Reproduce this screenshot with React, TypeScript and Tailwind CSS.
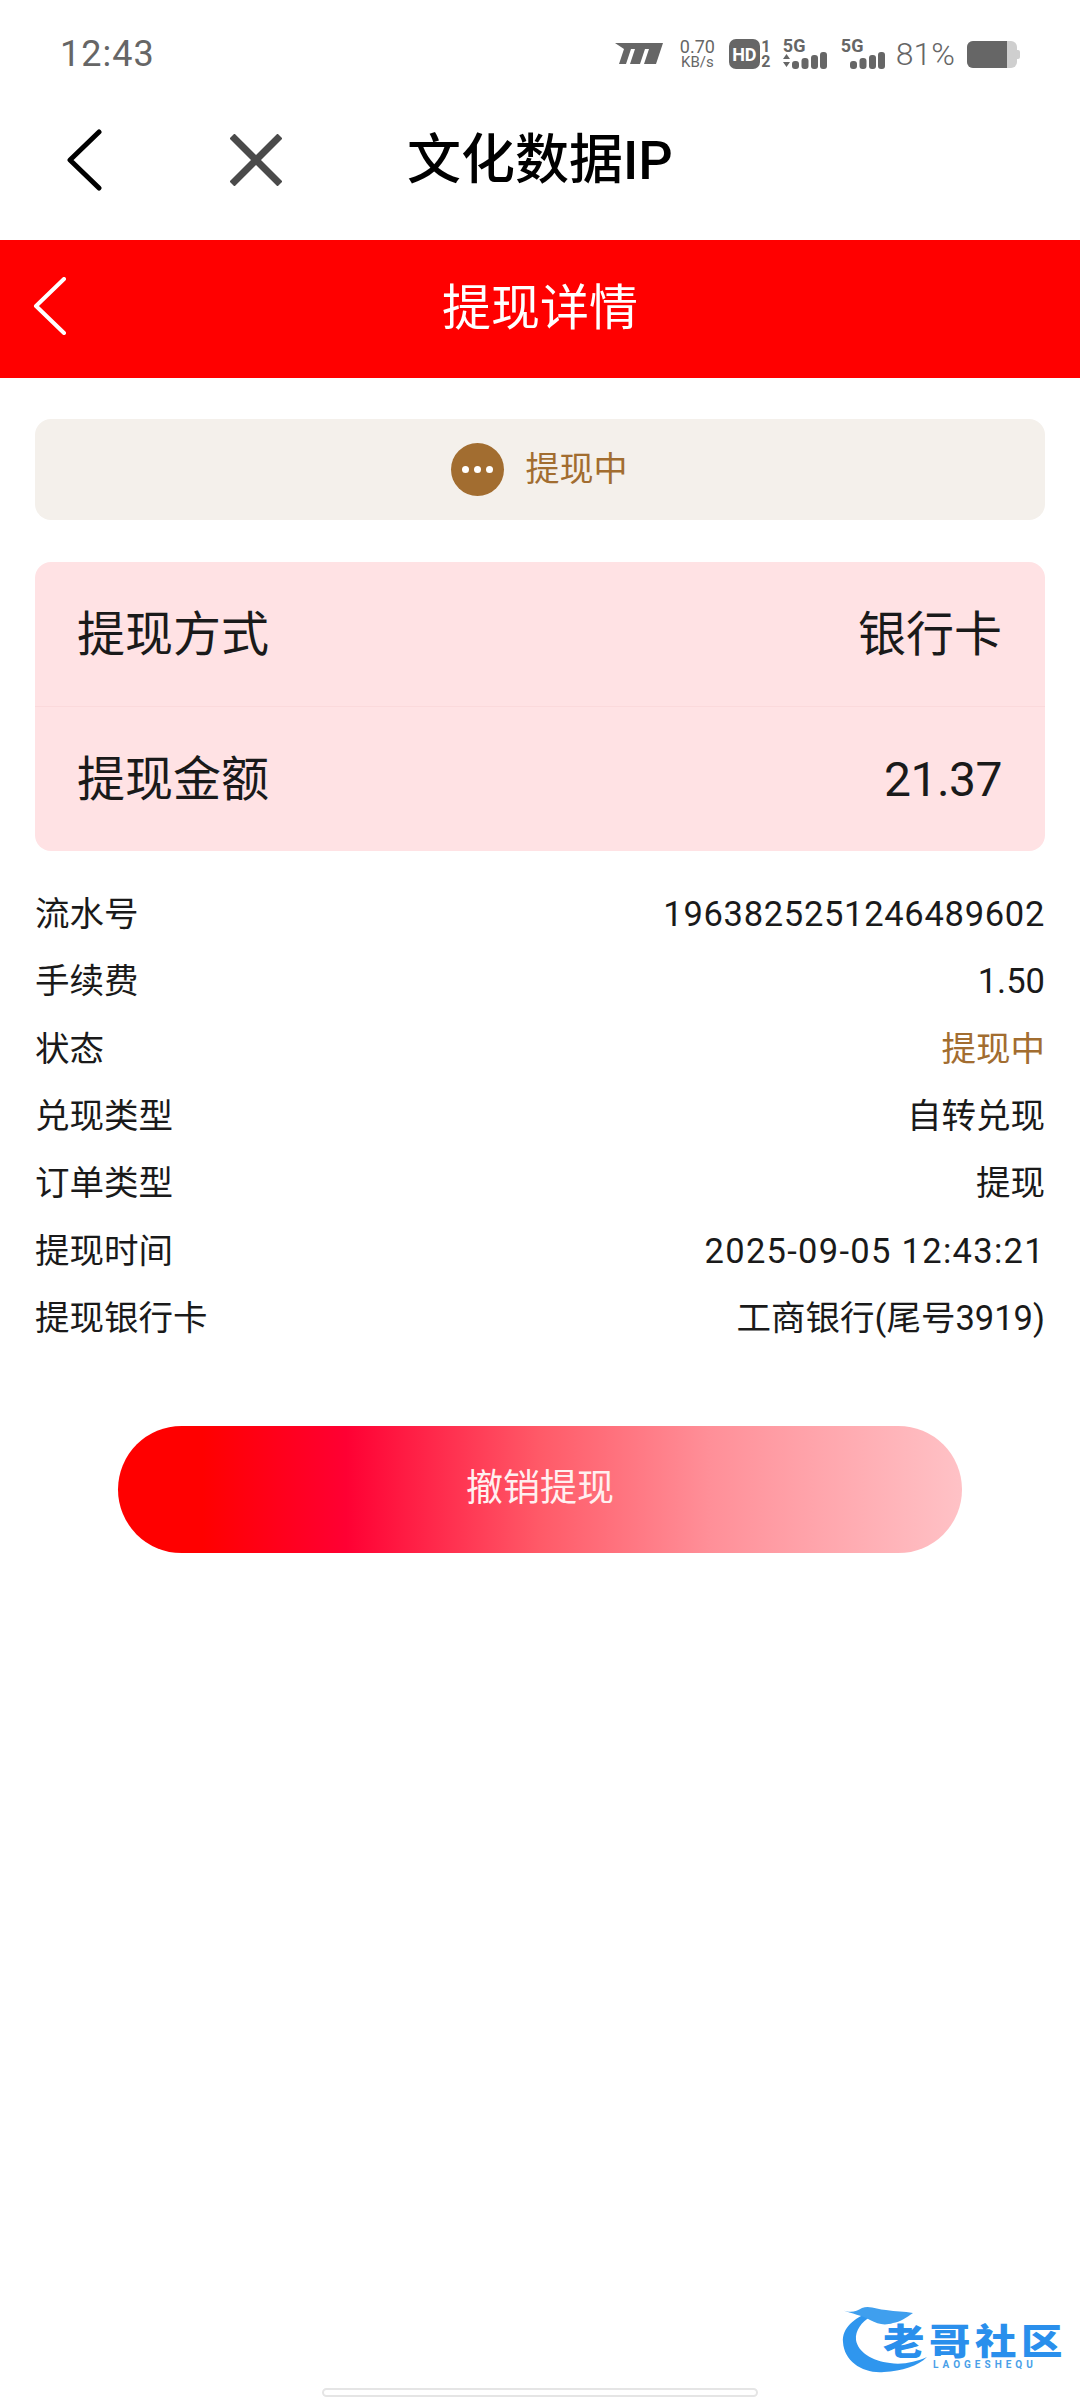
const FONT = '"Roboto", "Noto Sans CJK SC", sans-serif';

const details: { label: string; value: string; highlight?: boolean; spacing?: string }[] = [
  { label: '流水号', value: '1963825251246489602', spacing: 'tracking-[0.7px]' },
  { label: '手续费', value: '1.50' },
  { label: '状态', value: '提现中', highlight: true },
  { label: '兑现类型', value: '自转兑现' },
  { label: '订单类型', value: '提现' },
  { label: '提现时间', value: '2025-09-05 12:43:21', spacing: 'tracking-[1.3px]' },
  { label: '提现银行卡', value: '工商银行(尾号3919)' },
];

function SignalBars({ arrows }: { arrows?: boolean }) {
  return (
    <svg className="block" width="44" height="17" viewBox="0 0 44 17" fill="#666">
      {arrows && <path d="M0 7 L3.5 2 L7 7 Z M0 10 L7 10 L3.5 15 Z" />}
      <rect x="9" y="9" width="7" height="8" rx="3" />
      <rect x="18.5" y="6" width="7" height="11" rx="3" />
      <rect x="28" y="3" width="7" height="14" rx="3" />
      <rect x="37" y="0" width="7" height="17" rx="3" />
    </svg>
  );
}

function StatusBar() {
  return (
    <div className="h-[108px] flex items-center justify-between pl-[60px] pr-[60px] text-[#666]">
      <span className="text-[36px] tracking-[1px]">12:43</span>
      <div className="flex items-center">
        <svg width="48" height="22" viewBox="0 0 48 22" fill="#666">
          <path d="M0 0 H48 L41 21 H29 L34 6 H30 L25 21 H15 L20 6 H16 L11 21 H4 L9 6 Z" />
        </svg>
        <div className="ml-[17px] w-[35px] flex flex-col items-center leading-none">
          <span className="text-[18px] leading-[17px]">0.70</span>
          <span className="text-[15px] leading-[15px]">KB/s</span>
        </div>
        <div className="ml-[14px] w-[31px] h-[30px] rounded-[7px] bg-[#666] text-white text-[18px] font-bold flex items-center justify-center">
          HD
        </div>
        <div className="ml-[1px] w-[10px] flex flex-col items-center text-[16px] font-bold leading-[15px]">
          <span>1</span>
          <span>2</span>
        </div>
        <div className="ml-[12px] w-[44px] flex flex-col">
          <span className="text-[18px] font-bold leading-[13px]">5G</span>
          <SignalBars arrows />
        </div>
        <div className="ml-[14px] w-[44px] flex flex-col">
          <span className="text-[18px] font-bold leading-[13px]">5G</span>
          <SignalBars />
        </div>
        <span className="ml-[11px] text-[32px] font-light">81%</span>
        <div className="ml-[12px] flex items-center">
          <div className="w-[50px] h-[27px] rounded-[6px] bg-[#cfcfcf] overflow-hidden">
            <div className="w-[80%] h-full bg-[#666]" />
          </div>
          <div className="w-[3px] h-[9px] rounded-r-[2px] bg-[#cfcfcf]" />
        </div>
      </div>
    </div>
  );
}

function NavBar() {
  return (
    <div className="h-[132px] pb-[28px] flex items-center">
      <svg className="ml-[66px]" width="36" height="62" viewBox="0 0 36 62" fill="none" stroke="#000" strokeWidth="5" strokeLinecap="round" strokeLinejoin="round">
        <path d="M33 3 L4 31 L33 59" />
      </svg>
      <svg className="ml-[128px]" width="52" height="52" viewBox="0 0 52 52" fill="none" stroke="#4a4a4a" strokeWidth="7">
        <path d="M2 2 L50 50 M50 2 L2 50" />
      </svg>
      <span className="ml-[125px] text-[54px] font-medium text-black">文化数据IP</span>
    </div>
  );
}

function RedHeader() {
  return (
    <div className="h-[138px] bg-[#ff0000] relative flex items-center justify-center">
      <svg className="absolute left-[33px] top-[37px]" width="34" height="58" viewBox="0 0 34 58" fill="none" stroke="#fff" strokeWidth="4" strokeLinecap="round" strokeLinejoin="round">
        <path d="M31 2 L3 29 L31 56" />
      </svg>
      <span className="text-[49px] text-white">提现详情</span>
    </div>
  );
}

function Watermark() {
  return (
    <div className="absolute left-[840px] top-[2302px] w-[230px] h-[78px] pointer-events-none">
      <svg className="absolute left-0 top-0" width="100" height="78" viewBox="0 0 100 78" fill="none">
        <path d="M30 10 C14 16 2 26 3 40 C4 60 24 72 44 70 C62 69 78 64 87 55 C76 60 62 63 50 61 C32 59 18 50 16 38 C15 28 22 20 30 15 Z" fill="#2f96ee" />
        <path d="M2 8 C10 11 16 10 22 6 C30 3 38 8 46 8 C56 10 64 9 73 11 C66 16 60 20 53 21 C44 24 38 22 30 18 C22 13 12 12 2 8 Z" fill="#3f9fee" />
      </svg>
      <span className="absolute left-[43px] top-[25px] text-[36px] leading-[32px] font-black text-[#2a8fec] whitespace-nowrap tracking-[4px] origin-left scale-x-[1.15]">老哥社区</span>
      <span className="absolute left-[93px] top-[58px] text-[10px] leading-[10px] font-bold text-[#4a9fe8] tracking-[4px]">LAOGESHEQU</span>
    </div>
  );
}

export default function App() {
  return (
    <div className="w-[1080px] h-[2400px] bg-white flex flex-col relative overflow-hidden" style={{ fontFamily: FONT }}>
      <StatusBar />
      <NavBar />
      <RedHeader />

      <div className="flex-1 px-[35px] pt-[41px] flex flex-col">
        {/* 状态 */}
        <div className="h-[101px] rounded-[16px] bg-[#f4f0eb] flex items-center justify-center">
          <div className="w-[53px] h-[53px] rounded-full bg-[#a26d30] flex items-center justify-center gap-[5px] -ml-[2px]">
            <span className="w-[7px] h-[7px] rounded-full bg-white" />
            <span className="w-[7px] h-[7px] rounded-full bg-white" />
            <span className="w-[7px] h-[7px] rounded-full bg-white" />
          </div>
          <span className="ml-[22px] text-[34px] text-[#a26d30]">提现中</span>
        </div>

        {/* 方式和金额 */}
        <div className="mt-[42px] rounded-[16px] bg-[#ffe2e4] text-[48px] text-[#1a1a1a]">
          <div className="h-[145px] pl-[42px] pr-[43px] pt-[2px] flex items-center justify-between border-b border-[#fbd9db]">
            <span>提现方式</span>
            <span>银行卡</span>
          </div>
          <div className="h-[144px] pl-[42px] pr-[43px] pt-[1px] flex items-center justify-between">
            <span>提现金额</span>
            <span className="tracking-[-0.5px]">21.37</span>
          </div>
        </div>

        {/* 明细 */}
        <div className="mt-[30px] flex flex-col text-[34.5px] text-[#1a1a1a]">
          {details.map((row) => (
            <div key={row.label} className="h-[67.4px] flex items-center justify-between">
              <span>{row.label}</span>
              <span className={`${row.highlight ? 'text-[#a26d30]' : ''} ${row.spacing ?? ''}`}>{row.value}</span>
            </div>
          ))}
        </div>

        <div className="mt-[73px] mx-[83px] h-[127px] rounded-full bg-[linear-gradient(to_right,#ff0000_10%,#ff0033_27%,#ff5a68_50%,#ff8f98_70%,#ffc2c6_100%)] flex items-center justify-center">
          <span className="text-[37px] text-[#fff0f0]">撤销提现</span>
        </div>

        <div className="mt-auto mb-[3px] mx-[287px] h-[9px] rounded-full border-2 border-[#e5e5e5]" />
      </div>

      <Watermark />
    </div>
  );
}
